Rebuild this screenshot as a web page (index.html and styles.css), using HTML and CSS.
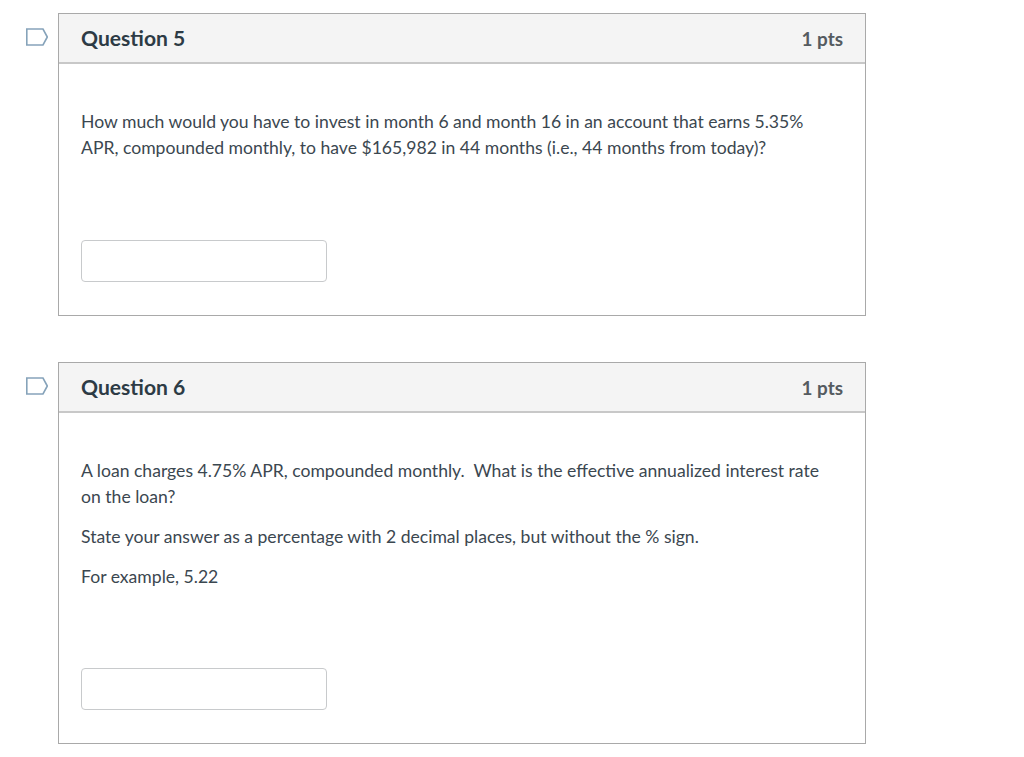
FILE: index.html
```html
<!DOCTYPE html>
<html lang="en">
<head>
<meta charset="utf-8">
<title>Quiz</title>
<link rel="stylesheet" href="styles.css">
</head>
<body>
<main class="quiz">
  <section class="question-row q5">
    <svg class="flag" width="24" height="18" viewBox="0 0 24 18"><path class="flag-line" d="M2.800 1H19L23.300 9L19 17H2.800Z"/></svg>
    <div class="card">
      <header class="card-head"><h2>Question 5</h2><span class="pts">1 pts</span></header>
      <div class="card-body">
        <p class="text">How much would you have to invest in month 6 and month 16 in an account that earns 5.35% APR, compounded monthly, to have $165,982 in 44 months (i.e., 44 months from today)?</p>
        <input class="answer" type="text">
      </div>
    </div>
  </section>
  <section class="question-row q6">
    <svg class="flag" width="24" height="18" viewBox="0 0 24 18"><path class="flag-line" d="M2.800 1H19L23.300 9L19 17H2.800Z"/></svg>
    <div class="card">
      <header class="card-head"><h2>Question 6</h2><span class="pts">1 pts</span></header>
      <div class="card-body">
        <p class="text">A loan charges 4.75% APR, compounded monthly.&nbsp; What is the effective annualized interest rate on the loan?</p>
        <p class="text">State your answer as a percentage with 2 decimal places, but without the % sign.</p>
        <p class="text">For example, 5.22</p>
        <input class="answer" type="text">
      </div>
    </div>
  </section>
</main>
</body>
</html>
```
FILE: styles.css
```css
* { box-sizing: border-box; }
html, body { margin: 0; background: #fff; }
body { font-family: Lato, sans-serif; color: #2d3b45; height: 757px; overflow: hidden; }
.quiz { display: flex; flex-direction: column; padding: 13px 0 0 24px; gap: 46px; }
.question-row { display: flex; align-items: flex-start; gap: 10px; }
.flag { flex: none; margin-top: 15px; }
.flag-line { fill: none; stroke: #86a3ba; stroke-width: 1.6; }
.card { width: 808px; border: 1px solid #a9a9a9; display: flex; flex-direction: column; }
.card-head { height: 50px; background: #f4f4f4; border-bottom: 2px solid #c8c8c8; display: flex; align-items: center; justify-content: space-between; padding: 0 22px; }
.card-head h2 { margin: 0 0 2px; font-size: 21.1px; font-weight: 700; }
.pts { font-size: 18.9px; font-weight: 700; color: #555b60; }
.card-body { padding: 45px 22px 33px; display: flex; flex-direction: column; }
.text { margin: 0 0 14px; padding-right: 12px; font-size: 17.58px; line-height: 26px; color: #3b4750; }
.answer { width: 246px; height: 42px; border: 1px solid #c8cacc; border-radius: 4px; background: #fff; }
.q5 .answer { margin-top: 65px; }
.q6 .answer { margin-top: 64px; }
```
